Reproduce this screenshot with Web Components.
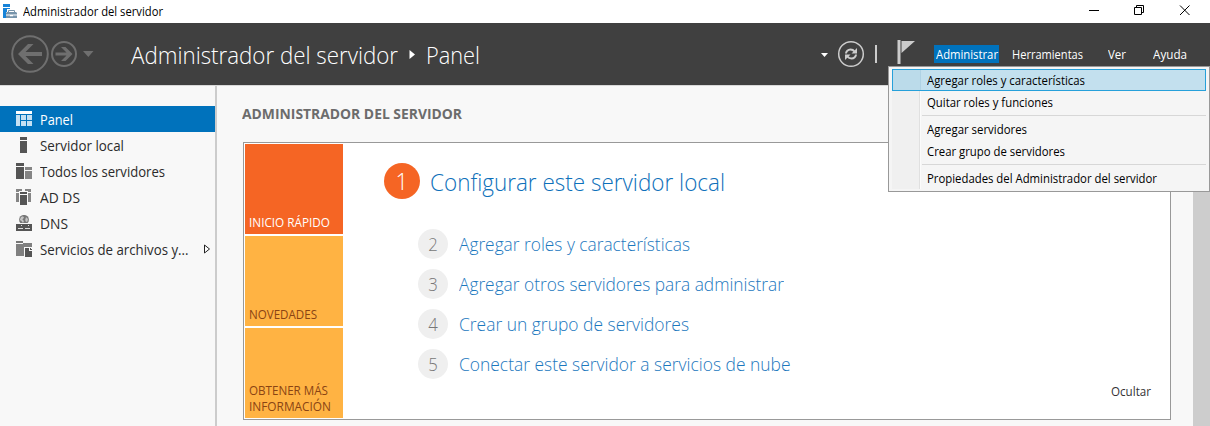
<!DOCTYPE html>
<html lang="es">
<head>
<meta charset="utf-8">
<title>Administrador del servidor</title>
<style>
html,body{margin:0;height:100%;overflow:hidden;background:#f8f8f8}
body{font-family:"Open Sans","Noto Sans",sans-serif;font-size:12px;color:#111}
</style>
</head>
<body>
<server-manager></server-manager>
<script>
function define(name, html, setup) {
  const t = document.createElement('template');
  t.innerHTML = html;
  customElements.define(name, class extends HTMLElement {
    constructor() {
      super();
      this.attachShadow({mode: 'open'}).appendChild(t.content.cloneNode(true));
    }
    connectedCallback() { if (setup) setup(this, this.shadowRoot); }
  });
}

/* A single line of text, condensed so that it fills the width given in "w". */
define('ui-text', `<style>:host{display:inline-block;white-space:pre;flex:none}span{display:inline-block;transform-origin:0 50%}</style><span><slot></slot></span>`,
  (el, root) => {
    const w = parseFloat(el.getAttribute('w'));
    const s = root.querySelector('span');
    const natural = s.getBoundingClientRect().width;
    if (w && natural) {
      s.style.transform = 'scaleX(' + (w / natural).toFixed(4) + ')';
      el.style.width = w + 'px';
    }
  });

define('title-bar', `<style>
:host{display:flex;height:23px;background:#fff;color:#000;align-items:flex-start}
.i{margin:4px 0 0 3px}
ui-text{margin-left:6px;line-height:24px;height:23px;font-size:12px}
.c{margin-left:auto;margin-right:19px}
</style>
<svg class="i" width="14" height="14" viewBox="0 0 14 14"><path fill="#1683d8" d="M0 0h7v3H0zM0 4h7v1H4v3H3v6H0z"/><path fill="none" stroke="#7794ab" d="M5.500 8V6.500h6V8"/><path fill="#7794ab" d="M4 8h9l1 1v1.500H3V9zM3 11.500h4v.8h3v-.8h4V14H3z"/></svg>
<ui-text w="140">Administrador del servidor</ui-text>
<svg class="c" width="102" height="22" viewBox="0 0 102 22" fill="none" stroke="#000"><path d="M0 10.500h10M45.500 7.500h7v7h-7zM47.500 7.500v-2h7v7h-2M91 5.500l9.500 9.500M100.500 5.500L91 15"/></svg>`);

define('nav-buttons', `<style>:host{display:block;width:100px;height:62px;flex:none}svg{display:block}</style>
<svg width="100" height="62" fill="none" stroke="#6f6f6f"><circle cx="30" cy="31" r="17.800" stroke-width="2"/><circle cx="64" cy="31" r="12" stroke-width="2"/><path fill="#6f6f6f" stroke="none" d="M18 31l10-10h5.500l-8 8H42v4H25.500l8 8H28zM72.500 31l-7-7H61l5.500 5.500H55.500v3h11L61 38h4.500zM83 28h10.500l-5.200 6z"/></svg>`);

define('menu-item', `<style>
:host{display:block;height:18px;box-sizing:border-box;color:#fff;line-height:20px;padding-left:2px}
:host([open]){background:#0072bc}
</style><slot></slot>`);

define('header-bar', `<style>
:host{display:flex;height:62px;background:#404040;border-bottom:1px solid #d9d9d9;color:#fff}
.t{font-size:23.500px;font-weight:300;line-height:64px;height:62px}
.a{margin:26px 0 0 11px;width:7px;flex:none}
.tools{margin-left:auto;width:114px;flex:none}
nav{display:flex;padding-top:22px;width:276px;flex:none}
</style>
<nav-buttons></nav-buttons>
<ui-text class="t" w="267" style="margin-left:30.500px">Administrador del servidor</ui-text>
<svg class="a" width="7" height="11"><path fill="#fff" d="M.5 1l5.500 4.500L.5 10z"/></svg>
<ui-text class="t" w="54" style="margin-left:10px">Panel</ui-text>
<svg class="tools" width="114" height="62" viewBox="820 0 114 62" fill="none"><path fill="#fff" d="M821 30h7l-3.500 4z"/><circle cx="851" cy="31" r="12.300" stroke="#ccc" stroke-width="1.500"/><path stroke="#ccc" stroke-width="2" d="M846 30.500c0-2 2-4 4.500-4 1.800 0 3 .6 4 2M856 31.500c0 2-2 4-4.500 4-1.800 0-3-.6-4-2"/><path fill="#ccc" d="M857 25v5.500h-5.500zM845 37v-5.500h5.500z"/><path fill="#ccc" d="M875 22h2v18h-2zM897.500 17h3v24h-3zM901.500 18H915l-13.500 12z"/></svg>
<nav><menu-item open style="width:65px"><ui-text w="62">Administrar</ui-text></menu-item>
<menu-item style="margin-left:11px"><ui-text w="71">Herramientas</ui-text></menu-item>
<menu-item style="margin-left:23px"><ui-text w="18">Ver</ui-text></menu-item>
<menu-item style="margin-left:25px"><ui-text w="34">Ayuda</ui-text></menu-item></nav>`);

define('side-item', `<style>
:host{display:flex;height:26px;align-items:center;padding-left:16px;color:#2b2b2b;font-size:13.800px;line-height:24px}
:host([selected]){background:#0072bc;color:#fff}
.g{width:16px;height:16px;margin-right:8px;display:block}
::slotted(ui-text){padding-top:2px}
</style>
<svg class="g" viewBox="0 0 16 16" shape-rendering="crispEdges"></svg><slot></slot>`,
(el, root) => {
  const icons = {
    panel: '<path fill="#fff" d="M0 0h16v3H0z"/><path fill="#c5e1f3" d="M0 4h4v11H0zM5 4h5v5H5zM11 4h5v5h-5zM5 10h5v5H5zM11 10h5v5h-5z"/>',
    server: '<path fill="#555" d="M4 0h7v3H4zM4 4h7v12H4z"/>',
    all: '<path fill="#555" d="M0 0h8v3H0zM0 4h8v12H0z"/><path fill="#858585" d="M9 4h7v3H9zM9 8h7v8H9z"/>',
    ad: '<path fill="#858585" d="M0 0h6v2H3v1H0zM0 4h3v9H0zM9 0h6v3h-3V2H9zM12 4h3v9h-3z"/><path fill="#555" d="M4 3h7v2H4zM4 6h7v10H4z"/>',
    dns: '<g shape-rendering="auto"><circle cx="8" cy="4.800" r="4.900" fill="#777"/><path fill="#c4c4c4" d="M5 2l2-.8 1 1.600-1.600 1.600L8 6l-1 2-2-2.400-1.400-.4zM10 2l2 2-.6 2.600L10 7l-.8-2z"/></g><path fill="#f8f8f8" d="M0 8h16v1H0z"/><path fill="#555" d="M0 9h16v7H0z"/><path fill="#ddd" d="M2 13h5v1H2zM9 13h5v1H9zM5 10h1v1H5zM12 10h1v1h-1z"/>',
    files: '<path fill="#777" d="M0 0h6l1 1v1H0z"/><path fill="#808080" d="M0 3h7V2h9v4H9v9H0z"/><path fill="#f8f8f8" d="M8 6h8v10H8z"/><path fill="#555" d="M9 7h4v3h3v6H9z"/><path fill="#555" d="M14 7l2 2h-2z"/>'
  };
  root.querySelector('.g').innerHTML = icons[el.getAttribute('icon')];
});

define('side-nav', `<style>:host{display:block;width:215px;padding-top:20px;border-right:2px solid #ccc;flex:none}svg{margin-left:15px}</style>
<side-item icon="panel" selected><ui-text w="33">Panel</ui-text></side-item>
<side-item icon="server"><ui-text w="84">Servidor local</ui-text></side-item>
<side-item icon="all"><ui-text w="125">Todos los servidores</ui-text></side-item>
<side-item icon="ad"><ui-text w="40">AD DS</ui-text></side-item>
<side-item icon="dns"><ui-text w="28">DNS</ui-text></side-item>
<side-item icon="files"><ui-text w="148.500">Servicios de archivos y...</ui-text><svg width="7" height="10"><path fill="#fff" stroke="#222" d="M.5 1l5 4-5 4z"/></svg></side-item>`);

define('quick-tile', `<style>
:host{display:flex;flex-direction:column;justify-content:flex-end;width:98px;height:90px;box-sizing:border-box;padding:0 0 3px 4px;line-height:16px;background:#ffb343;color:#8a4413;margin-bottom:2px}
:host([primary]){background:#f56524;color:#fff}
</style><slot></slot>`);

define('step-row', `<style>
:host{display:flex;align-items:center;height:30px;margin:0 0 10px 35px;font-size:18px;font-weight:300;color:#1c78be}
.n{width:30px;height:30px;line-height:30px;border-radius:50%;background:#efefef;color:#777;text-align:center;margin-right:10.500px;flex:none}
.n span{display:inline-block;transform:scaleX(.93)}
:host([primary]){height:36px;margin:0 0 30px 1px;font-size:23.800px;color:#0e70ba;line-height:36px}
:host([primary]) .n{width:36px;height:36px;line-height:36px;margin-right:10px;background:#f56524;color:#fff}
:host([primary]) ::slotted(ui-text){padding-top:2px}
</style><div class="n"><span></span></div><slot></slot>`, (el, root) => { root.querySelector('span').textContent = el.getAttribute('n'); });

define('welcome-panel', `<style>
:host{display:flex;box-sizing:border-box;width:928px;height:278px;border:1px solid #999;background:#fff;padding:1px}
.s{padding:19px 0 0 40px}
.h{margin:237px 18.500px 0 auto;line-height:22px;color:#333}
</style>
<div><quick-tile primary><ui-text w="81">INICIO RÁPIDO</ui-text></quick-tile>
<quick-tile><ui-text w="68">NOVEDADES</ui-text></quick-tile>
<quick-tile><ui-text w="79">OBTENER MÁS</ui-text><ui-text w="82">INFORMACIÓN</ui-text></quick-tile></div>
<div class="s">
<step-row n="1" primary><ui-text w="295">Configurar este servidor local</ui-text></step-row>
<step-row n="2"><ui-text w="231">Agregar roles y características</ui-text></step-row>
<step-row n="3"><ui-text w="325">Agregar otros servidores para administrar</ui-text></step-row>
<step-row n="4"><ui-text w="230">Crear un grupo de servidores</ui-text></step-row>
<step-row n="5"><ui-text w="331.500">Conectar este servidor a servicios de nube</ui-text></step-row>
</div>
<ui-text class="h" w="40">Ocultar</ui-text>`);

define('dashboard-view', `<style>
:host{display:flex;flex:1}
main{padding:18px 0 0 26px;flex:1}
h1{font-size:14px;line-height:20px;font-weight:700;color:#6c6c6c;margin:0 0 18px -1px}
.b{width:17px;background:#cdcdcd}
</style><main><h1><ui-text w="220">ADMINISTRADOR DEL SERVIDOR</ui-text></h1><welcome-panel></welcome-panel></main><div class="b"></div>`);

define('drop-item', `<style>
:host{display:block;height:22px;box-sizing:border-box;line-height:22px;padding-left:34px;border:1px solid transparent}
:host([active]){background:linear-gradient(90deg,#bbdbea 27px,#afd2e4 27px,#afd2e4 28px,#c3e0ee 28px);border-color:#26a0da}
</style><slot></slot>`);

define('drop-menu', `<style>
:host{display:block;position:absolute;left:888px;top:66px;width:322px;height:126px;box-sizing:border-box;border:1px solid #999;padding:2px 3px;background:#f5f5f5 linear-gradient(90deg,#f0f0f0 27px,#e0e0e0 27px,#e0e0e0 28px,#fbfbfb 28px,#fbfbfb 29px,transparent 29px) 3px 2px/29px 120px no-repeat;color:#000}
hr{border:0;margin:2px 0 2px 30px;height:1px;background:#d7d7d7}
</style>
<drop-item active><ui-text w="158">Agregar roles y características</ui-text></drop-item>
<drop-item><ui-text w="126">Quitar roles y funciones</ui-text></drop-item><hr>
<drop-item><ui-text w="100">Agregar servidores</ui-text></drop-item>
<drop-item><ui-text w="138">Crear grupo de servidores</ui-text></drop-item><hr>
<drop-item><ui-text w="230">Propiedades del Administrador del servidor</ui-text></drop-item>`);

define('server-manager', `<style>
:host{display:flex;flex-direction:column;position:relative;width:1210px;height:426px;background:#f8f8f8;overflow:hidden}
.m{display:flex;flex:1}
</style><title-bar></title-bar><header-bar></header-bar><div class="m"><side-nav></side-nav><dashboard-view></dashboard-view></div><drop-menu></drop-menu>`);
</script>
</body>
</html>
